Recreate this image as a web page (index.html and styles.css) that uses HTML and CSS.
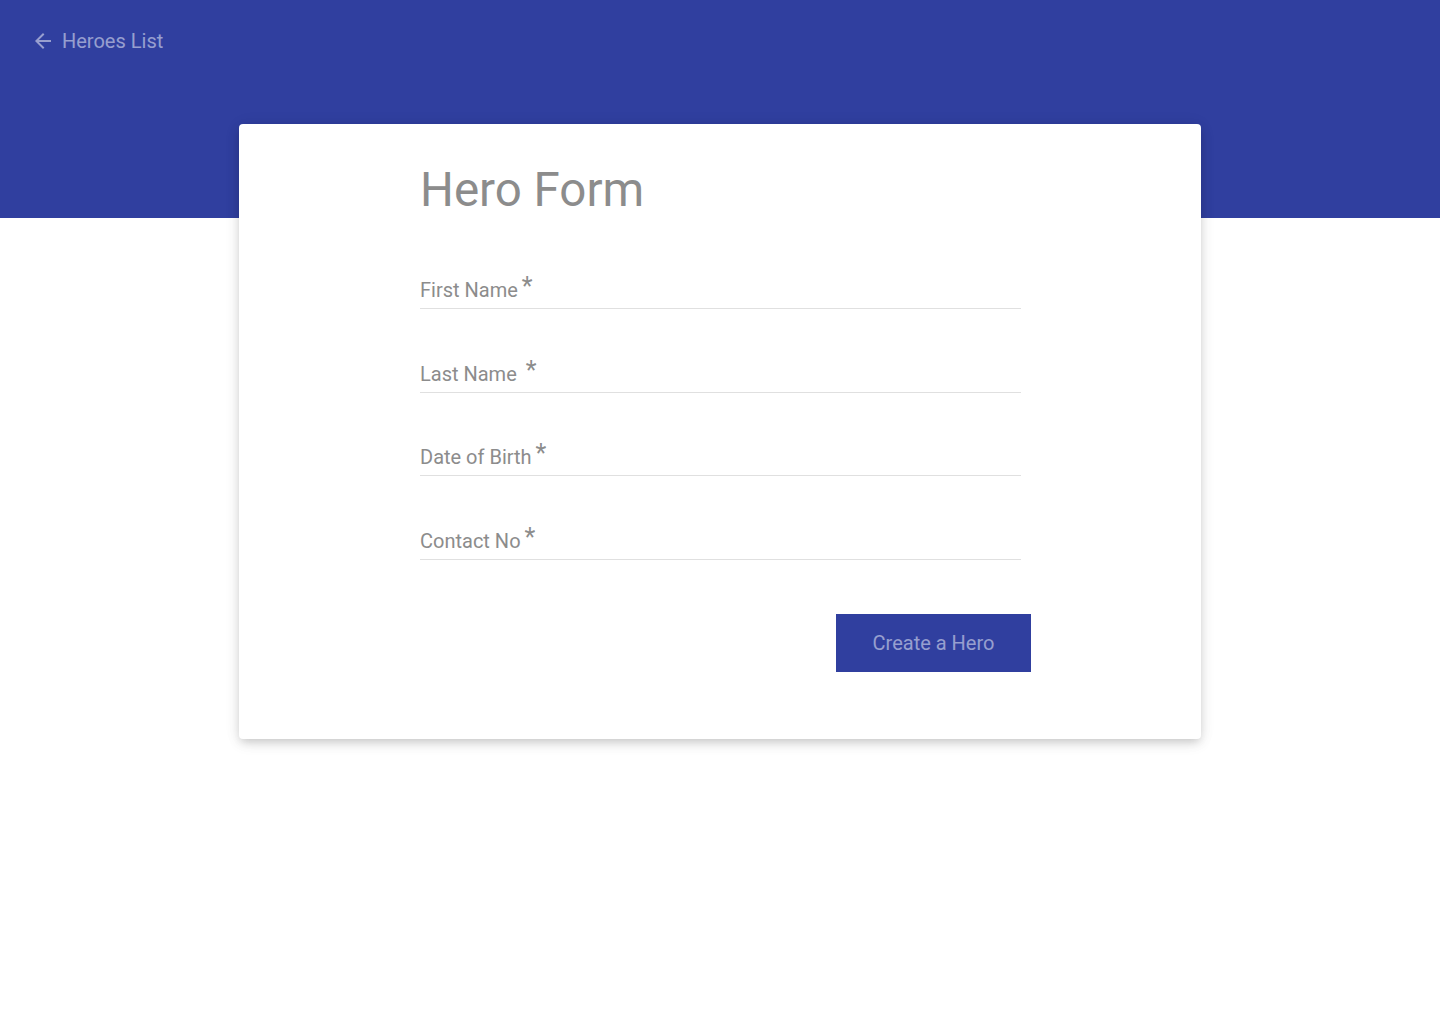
FILE: index.html
```html
<!DOCTYPE html>
<html lang="en">
<head>
<meta charset="utf-8">
<title>Hero Form</title>
<link rel="stylesheet" href="styles.css">
</head>
<body>
<header class="topbar">
  <a class="back-link" href="#">
    <svg class="back-icon" viewBox="0 0 24 24" width="24" height="24" aria-hidden="true"><path d="M20 11H7.83l5.59-5.59L12 4l-8 8 8 8 1.41-1.41L7.83 13H20v-2z"/></svg>
    <span>Heroes List</span>
  </a>
</header>
<main class="card">
  <h1 class="title">Hero Form</h1>
  <form class="form">
    <div class="field"><label class="label">First Name<span class="req">*</span></label></div>
    <div class="field"><label class="label">Last Name <span class="req">*</span></label></div>
    <div class="field"><label class="label">Date of Birth<span class="req">*</span></label></div>
    <div class="field"><label class="label">Contact No<span class="req">*</span></label></div>
    <div class="actions"><button type="button" class="btn">Create a Hero</button></div>
  </form>
</main>
</body>
</html>
```
FILE: styles.css
```css
html, body {
  margin: 0;
  padding: 0;
  background: #ffffff;
  font-family: Roboto, "Noto Sans", "Liberation Sans", sans-serif;
}
body {
  min-height: 100vh;
  padding-bottom: 40px;
  box-sizing: border-box;
}
.topbar {
  background: #303f9f;
  height: 218px;
  box-sizing: border-box;
  padding: 29px 0 0 31px;
}
.back-link {
  display: inline-flex;
  align-items: center;
  gap: 7px;
  color: rgba(255, 255, 255, 0.5);
  text-decoration: none;
  font-size: 20px;
  line-height: 24px;
}
.back-icon {
  fill: rgba(255, 255, 255, 0.5);
  display: block;
}
.card {
  width: 962px;
  height: 615px;
  margin: -94px auto 0;
  background: #fff;
  border-radius: 4px;
  box-shadow: 0 4px 8px -2px rgba(0,0,0,.14), 0 5px 14px 0 rgba(0,0,0,.08), 0 1px 18px 0 rgba(0,0,0,.06);
  box-sizing: border-box;
  padding: 38px 0 0 181px;
  position: relative;
}
.title {
  margin: 0;
  font-weight: 400;
  font-size: 47.5px;
  line-height: 56px;
  color: #8c8c8c;
}
.form {
  width: 611px;
  margin-top: 61px;
  display: flex;
  flex-direction: column;
  gap: 53.67px;
}
.field {
  width: 601px;
  padding-bottom: 7px;
  border-bottom: 1px solid #e0e0e0;
}
.label {
  display: block;
  font-size: 20px;
  line-height: 22px;
  height: 22px;
  color: #8c8c8c;
}
.req {
  margin-left: 4px;
  font-size: 25px;
  line-height: 0;
  position: relative;
  top: -2px;
}
.actions {
  display: flex;
  justify-content: flex-end;
}
.btn {
  width: 195px;
  height: 58px;
  background: #303f9f;
  border: none;
  border-radius: 0;
  color: rgba(255, 255, 255, 0.5);
  font-family: inherit;
  font-size: 20px;
  padding: 0;
}
```
